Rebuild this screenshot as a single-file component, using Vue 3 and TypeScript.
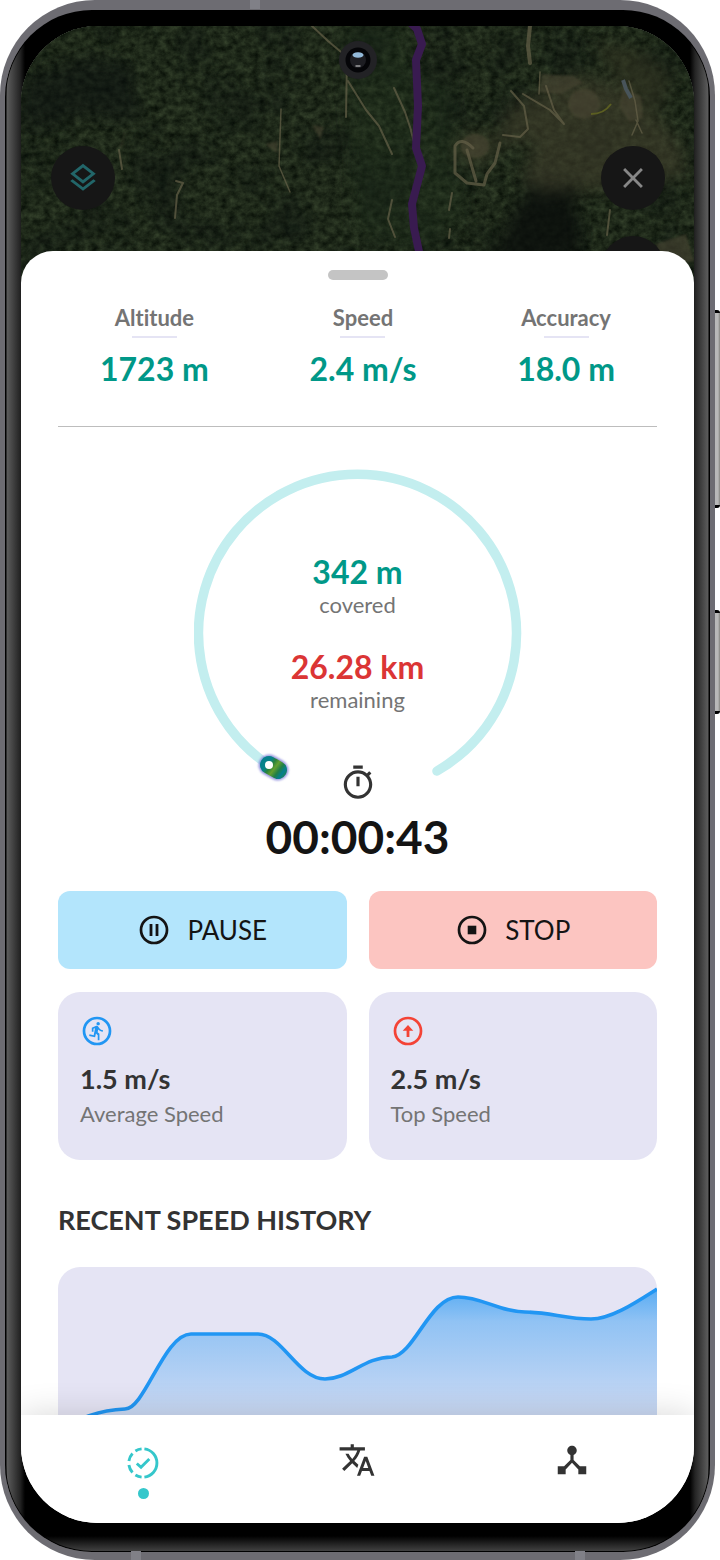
<script setup lang="ts">
import { ref } from 'vue'

interface Reading { label: string; value: string }

const readings: Reading[] = [
  { label: 'Altitude', value: '1723 m' },
  { label: 'Speed', value: '2.4 m/s' },
  { label: 'Accuracy', value: '18.0 m' },
]

const tabs = ['Progress', 'Translate', 'Route'] as const
const active = ref<string>('Progress')
const line =
  'M0 165C22 149 46 143 67 142C87 142 106 67 133 67L200 67C224 67 240 112 267 112C291 112 306 90 334 90C356 88 372 30 400 30C424 30 442 45 467 45C491 45 508 52 533 52C553 52 577 36 599 22'
</script>

<template>
  <div class="stage">
    <div class="side-key volume"></div>
    <div class="side-key power"></div>
    <div class="device">
      <i class="antenna top"></i>
      <i class="antenna bottom-left"></i>
      <i class="antenna bottom-right"></i>
      <div class="bezel">
        <main class="screen">
          <section class="map" aria-label="Map">
            <svg class="terrain" viewBox="0 0 673 262" preserveAspectRatio="xMidYMid slice" aria-hidden="true">
              <defs>
                <filter id="trees" x="0" y="0" width="100%" height="100%" color-interpolation-filters="sRGB">
                  <feTurbulence type="fractalNoise" baseFrequency="0.13 0.15" numOctaves="5" seed="8" />
                  <feColorMatrix values="0.22 0 0 0 0.01  0.25 0 0 0 0.035  0.18 0 0 0 0.01  0 0 0 0 1" />
                </filter>
                <filter id="patches" x="0" y="0" width="100%" height="100%" color-interpolation-filters="sRGB">
                  <feTurbulence type="fractalNoise" baseFrequency="0.018" numOctaves="4" seed="21" />
                  <feColorMatrix values="0 0 0 0 0.045  0 0 0 0 0.07  0 0 0 0 0.06  2.6 0 0 0 -1.15" />
                </filter>
                <filter id="soft" x="-30%" y="-30%" width="160%" height="160%" color-interpolation-filters="sRGB"><feGaussianBlur stdDeviation="8" /></filter>
                <filter id="edge" x="-30%" y="-30%" width="160%" height="160%" color-interpolation-filters="sRGB"><feGaussianBlur stdDeviation="1" /></filter>
              </defs>
              <rect width="673" height="262" fill="#1d2719" />
              <rect width="673" height="262" filter="url(#trees)" />
              <rect width="673" height="262" filter="url(#patches)" opacity=".45" />
              <g filter="url(#soft)">
                <path d="M0 55L65 30L110 40L120 95L60 90L0 105Z" fill="#0c1210" opacity=".55" />
                <path d="M320 0H390V40L430 60L445 190L400 225L335 210Z" fill="#20301c" opacity=".35" />
                <path d="M535 60L560 48L600 62L640 95L660 120L665 150L600 160L530 170L500 155L515 115L470 120L490 80Z" fill="#403d2c" opacity=".6" />
                <path d="M570 15L620 25L650 50L640 90L600 60Z" fill="#333623" opacity=".6" />
                <path d="M500 170L555 160L560 235L470 235Z" fill="#0a0e0b" opacity=".8" />
                <ellipse cx="454" cy="122" rx="20" ry="16" fill="#403f2c" opacity=".6" />
              </g>
              <g filter="url(#edge)" fill="#4a4734" opacity=".6">
                <ellipse cx="563" cy="78" rx="16" ry="15" />
                <path d="M521 48L553 50L562 57L540 68L518 66Z" />
                <path d="M602 62L620 70L622 92L608 96L598 80Z" />
                <ellipse cx="454" cy="120" rx="14" ry="12" />
                <path d="M635 218L665 208L673 235L640 240Z" />
                <path d="M291 99L303 101L299 113ZM244 118L257 115L256 127ZM98 125L106 99L101 120Z" />
              </g>
              <g fill="none" stroke="#666149" stroke-width="2" opacity=".7" stroke-linecap="round" stroke-linejoin="round">
                <path d="M291 0L307 15L326 31L325 91M327 55L345 84L358 100L371 128" />
                <path d="M260 83L258 140L269 166" stroke-width="1.5" />
                <path d="M98 124L101 143M155 155L162 157L156 169L154 192" stroke-width="2" />
                <path d="M373 62L384 86L390 104M390 105L394 120" stroke-width="2" />
                <path d="M509 0L507 20L509 37" stroke-width="4" />
                <path d="M452 122Q440 110 434 120V147L446 157L463 159L466 148L474 137L479 117M446 124L455 155" stroke-width="3" />
                <path d="M490 65L503 80L507 103L499 111L482 109M502 68L529 84L543 98L533 84L525 60" />
                <path d="M519 46L518 68M608 55L614 75L617 95L611 109M615 94L621 107" stroke-width="1.5" />
                <path d="M589 184L586 209M371 174L367 193L374 211M431 167L428 184M429 203L428 212" stroke-width="2" />
              </g>
              <path d="M570 88Q583 88 590 78" fill="none" stroke="#5b5e22" stroke-width="2" />
              <path d="M602 54L605 63L610 72" fill="none" stroke="#48545a" stroke-width="4" />
              <path class="route" d="M387 -6L396 3L401 18L395 34L397 80L395 122L401 140L391 178L393 202L400 235" />
            </svg>
            <span class="camera">
              <svg viewBox="0 0 38 38" aria-hidden="true">
                <circle cx="19" cy="19" r="19" fill="#222225" /><circle cx="19" cy="19" r="12.5" fill="#050508" />
                <circle cx="19" cy="19" r="8" fill="#1d1d22" />
                <ellipse cx="19" cy="14" rx="5.5" ry="2.8" fill="#93b9d9" /><path d="M16.5 25h5" stroke="#aaa" stroke-width="1.4" />
              </svg>
            </span>
            <button class="round layers" type="button" aria-label="Map layers">
              <svg viewBox="0 0 24 24"><path d="M11.99 18.54l-7.37-5.73L3 14.07l9 7 9-7-1.63-1.27-7.38 5.74zM12 16l7.36-5.73L21 9l-9-7-9 7 1.63 1.27L12 16zm0-11.47L17.74 9 12 13.47 6.26 9 12 4.53z" /></svg>
            </button>
            <div class="map-actions">
              <button class="round" type="button" aria-label="Close">
                <svg viewBox="0 0 24 24"><path d="M19 6.41L17.59 5 12 10.59 6.41 5 5 6.41 10.59 12 5 17.59 6.41 19 12 13.41 17.59 19 19 17.59 13.41 12z" /></svg>
              </button>
              <button class="round" type="button" aria-label="Locate"></button>
            </div>
          </section>

          <section class="sheet">
            <div class="handle"></div>
            <dl class="readings">
              <div v-for="r in readings" :key="r.label" class="reading">
                <dt>{{ r.label }}</dt>
                <dd>{{ r.value }}</dd>
              </div>
            </dl>
            <hr class="divider" />

            <div class="gauge">
              <svg class="arc" viewBox="0 0 328 316" aria-hidden="true">
                <defs>
                  <linearGradient id="bead" x1="68" y1="290" x2="92" y2="308" gradientUnits="userSpaceOnUse">
                    <stop offset="0" stop-color="#04808c" /><stop offset=".25" stop-color="#07838a" />
                    <stop offset=".38" stop-color="#29813c" /><stop offset=".52" stop-color="#649f30" />
                    <stop offset=".68" stop-color="#217f47" /><stop offset=".82" stop-color="#047f8f" />
                    <stop offset="1" stop-color="#278443" />
                  </linearGradient>
                  <filter id="glow" filterUnits="userSpaceOnUse" x="55" y="275" width="50" height="41"><feGaussianBlur stdDeviation="1.3" /></filter>
                </defs>
                <path d="M84 302A159 159 0 1 1 243 302" fill="none" stroke="#c3eeef" stroke-width="9.5" stroke-linecap="round" />
                <path d="M75 296L84 301" stroke="#6c6bd2" stroke-width="21" stroke-linecap="round" filter="url(#glow)" opacity=".7" />
                <path d="M75 296L84 301" stroke="url(#bead)" stroke-width="18" stroke-linecap="round" />
                <circle cx="75" cy="296" r="4" fill="#fff" />
              </svg>
              <div class="distances">
                <p class="amount">342 m</p>
                <p class="caption">covered</p>
                <p class="amount left">26.28 km</p>
                <p class="caption">remaining</p>
              </div>
            </div>

            <div class="timer">
              <svg viewBox="0 0 24 24" aria-hidden="true"><path d="M15 1H9v2h6V1zm-4 13h2V8h-2v6zm8.03-6.61l1.42-1.42c-.43-.51-.9-.99-1.41-1.41l-1.42 1.42C16.07 4.74 14.12 4 12 4c-4.97 0-9 4.03-9 9s4.02 9 9 9 9-4.03 9-9c0-2.12-.74-4.07-1.97-5.61zM12 20c-3.87 0-7-3.13-7-7s3.13-7 7-7 7 3.13 7 7-3.13 7-7 7z" /></svg>
              <time>00:00:43</time>
            </div>

            <div class="pair">
              <button class="action pause" type="button">
                <svg viewBox="0 0 34 34" aria-hidden="true"><circle cx="17" cy="17" r="13" fill="none" stroke="currentColor" stroke-width="2.7" /><path d="M14 11v12M20 11v12" stroke="currentColor" stroke-width="2.8" /></svg>
                PAUSE
              </button>
              <button class="action stop" type="button">
                <svg viewBox="0 0 34 34" aria-hidden="true"><circle cx="17" cy="17" r="13" fill="none" stroke="currentColor" stroke-width="2.7" /><path d="M12.7 12.7h8.6v8.6h-8.6z" fill="currentColor" /></svg>
                STOP
              </button>
            </div>

            <div class="pair cards">
              <article class="card">
                <svg class="blue" viewBox="0 0 34 34" aria-hidden="true">
                  <circle cx="17" cy="17" r="13" fill="none" stroke="currentColor" stroke-width="2.7" />
                  <g transform="translate(6.7 6.7) scale(.85)" fill="currentColor"><path d="M13.49 5.48c1.1 0 2-.9 2-2s-.9-2-2-2-2 .9-2 2 .9 2 2 2zm-3.6 13.9l1-4.4 2.1 2v6h2v-7.5l-2.1-2 .6-3c1.3 1.5 3.3 2.5 5.5 2.5v-2c-1.9 0-3.5-1-4.3-2.4l-1-1.6c-.4-.6-1-1-1.7-1-.3 0-.5.1-.8.1l-5.2 2.2v4.7h2v-3.4l1.8-.7-1.6 8.1-4.9-1-.4 2 7 1.4z" /></g>
                </svg>
                <strong>1.5 m/s</strong>
                <span>Average Speed</span>
              </article>
              <article class="card">
                <svg class="red" viewBox="0 0 34 34" aria-hidden="true">
                  <circle cx="17" cy="17" r="13" fill="none" stroke="currentColor" stroke-width="2.7" />
                  <path d="M17 11L22.3 16.7H18.4V23H15.6V16.7H11.7Z" fill="currentColor" />
                </svg>
                <strong>2.5 m/s</strong>
                <span>Top Speed</span>
              </article>
            </div>

            <h2>RECENT SPEED HISTORY</h2>
            <div class="chart">
              <svg viewBox="0 0 599 190" preserveAspectRatio="none" role="img" aria-label="Recent speed history">
                <defs>
                  <linearGradient id="area" x1="0" y1="22" x2="0" y2="170" gradientUnits="userSpaceOnUse">
                    <stop offset="0" stop-color="#2196f3" stop-opacity=".72" />
                    <stop offset=".22" stop-color="#2196f3" stop-opacity=".43" />
                    <stop offset="1" stop-color="#2196f3" stop-opacity=".06" />
                  </linearGradient>
                </defs>
                <path :d="line + 'V190H0Z'" fill="url(#area)" />
                <path :d="line" fill="none" stroke="#2196f3" stroke-width="3.6" />
              </svg>
            </div>
          </section>

          <nav class="tabs" aria-label="Main">
            <button v-for="t in tabs" :key="t" type="button" class="tab" :class="{ on: active === t }" :aria-label="t" @click="active = t">
              <svg v-if="t === 'Progress'" viewBox="0 0 38 38" fill="none" stroke="currentColor" stroke-width="2.9">
                <path d="M20.4 4.9A14.2 14.2 0 0 1 20.4 33.1" />
                <path d="M17.6 4.9A14.2 14.2 0 0 0 11.4 7M8.5 9.5A14.2 14.2 0 0 0 4.9 17M4.9 21A14.2 14.2 0 0 0 8.5 28.5M11.4 31A14.2 14.2 0 0 0 17.6 33.1" />
                <path d="M12.8 19.5L17 23.3L25.3 15" />
              </svg>
              <svg v-else-if="t === 'Translate'" viewBox="0 0 24 24" fill="currentColor"><path d="M12.87 15.07l-2.54-2.51.03-.03c1.74-1.94 2.98-4.17 3.71-6.53H17V4h-7V2H8v2H1v1.99h11.17C11.5 7.92 10.44 9.75 9 11.35 8.07 10.32 7.3 9.19 6.69 8h-2c.73 1.63 1.73 3.17 2.98 4.56l-5.09 5.02L4 19l5-5 3.11 3.11.76-2.04zM18.5 10h-2L12 22h2l1.12-3h4.75L21 22h2l-4.5-12zm-2.62 7l1.62-4.33L19.12 17h-3.24z" /></svg>
              <svg v-else viewBox="0 0 24 24" fill="currentColor"><path d="M17 16l-4-4V8.82C14.16 8.4 15 7.3 15 6c0-1.66-1.34-3-3-3S9 4.34 9 6c0 1.3.84 2.4 2 2.82V12l-4 4H3v5h5v-3.05l4-4.2 4 4.2V21h5v-5h-4z" /></svg>
              <i class="dot"></i>
            </button>
          </nav>
        </main>
      </div>
    </div>
  </div>
</template>

<style>
body { background: #fff; }
</style>

<style scoped>
* { box-sizing: border-box; }
p, dl, dd, h2 { margin: 0; }
button { border: 0; padding: 0; font: inherit; color: inherit; cursor: pointer; }
svg { display: block; }

.stage {
  position: relative;
  display: flex;
  height: 100vh;
  padding-right: 5px;
  font-family: Lato, "Open Sans", sans-serif;
  font-variant-ligatures: none;
}
.device {
  position: relative;
  display: flex;
  flex: 1;
  min-width: 0;
  padding: 10px 5px 8px;
  border-radius: 95px;
  background: #6d6c72;
  overflow: hidden;
}
.side-key {
  position: absolute;
  right: 0;
  width: 8px;
  background: linear-gradient(90deg, #b8b8b8 75%, #84847f);
  border: solid #000;
  border-width: 3px 0;
  border-radius: 0 3px 3px 0;
}
.volume { top: 310px; height: 198px; }
.power { top: 610px; height: 104px; }
.antenna { position: absolute; width: 10px; height: 9px; background: #808087; }
.top { top: 0; left: 250px; }
.bottom-left { bottom: 0; left: 131px; }
.bottom-right { bottom: 0; right: 130px; }

.bezel {
  display: flex;
  flex: 1;
  min-width: 0;
  padding: 16px 16px 29px;
  border-radius: 87px;
  box-shadow: inset 0 0 0 1px #000;
  background:
    linear-gradient(90deg, #000 1px, #5c5c5c 2px, #242424 15px, #000 20px) 0 32px / 20px calc(100% - 60px) no-repeat,
    linear-gradient(270deg, #000 1px, #5c5c5c 2px, #242424 15px, #000 20px) 100% 32px / 20px calc(100% - 60px) no-repeat,
    linear-gradient(0deg, #464646, #000 16px) #000;
}
.screen {
  display: flex;
  flex: 1;
  flex-direction: column;
  min-width: 0;
  border-radius: 77px;
  background: #fff;
  overflow: hidden;
}

.map { position: relative; flex: none; height: 262px; overflow: hidden; background: #1d2719; }
.terrain { width: 100%; height: 100%; }
.route { fill: none; stroke: #391b50; stroke-width: 8; stroke-linejoin: round; }
.camera { position: absolute; top: 15px; left: calc(50% - 19px); width: 38px; height: 38px; }
.round {
  display: grid;
  place-items: center;
  width: 64px;
  height: 64px;
  border-radius: 50%;
  background: #161616;
  color: #878787;
}
.round svg { width: 34px; height: 34px; fill: currentColor; }
.layers { position: absolute; top: 120px; left: 30px; color: #226669; }
.map-actions { position: absolute; top: 120px; right: 29px; display: grid; gap: 26px; }

.sheet {
  position: relative;
  flex: 1;
  min-height: 0;
  margin-top: -37px;
  padding: 19px 37px 0;
  border-radius: 32px 32px 0 0;
  background: #fff;
  overflow: auto;
  scrollbar-width: none;
}
.handle { width: 60px; height: 10px; margin: 0 auto; border-radius: 5px; background: #c4c4c4; }
.readings { display: flex; justify-content: space-between; margin-top: 26px; padding: 0 42px; }
.reading { display: flex; flex-direction: column; align-items: center; }
.reading dt { color: #747474; font-size: 22px; font-weight: 700; line-height: 24px; }
.reading dt::after { content: ""; display: block; width: 45px; height: 2px; margin: 6px auto 0; background: #e5e4f4; }
.reading dd { margin-top: 12px; color: #009888; font-size: 32px; font-weight: 700; line-height: 38px; }
.divider { height: 1px; margin: 38px 0 0; border: 0; background: #bdbdbd; }

.gauge { display: grid; justify-content: center; margin-top: 42px; }
.gauge > * { grid-area: 1 / 1; }
.arc { width: 328px; height: 316px; }
.distances { padding-top: 84px; text-align: center; }
.amount { color: #009888; font-size: 32px; font-weight: 700; line-height: 38px; }
.left { margin-top: 29px; color: #db3535; }
.caption { color: #747474; font-size: 22px; line-height: 28px; }

.timer { position: relative; display: flex; flex-direction: column; align-items: center; margin-top: -21px; gap: 10px; }
.timer svg { width: 38px; height: 38px; fill: #333; }
.timer time { color: #141414; font-size: 46px; font-weight: 700; line-height: 50px; }

.pair { display: grid; grid-template-columns: 1fr 1fr; gap: 22px; margin-top: 29px; }
.action {
  display: flex;
  align-items: center;
  justify-content: center;
  gap: 16px;
  height: 78px;
  border-radius: 12px;
  color: #141414;
  font-size: 26px;
}
.action svg { width: 34px; height: 34px; }
.pause { background: #b3e5fc; }
.stop { background: #fcc5c1; }
.cards { margin-top: 23px; }
.card { display: flex; flex-direction: column; height: 168px; padding: 22px; border-radius: 22px; background: #e5e4f4; }
.card svg { width: 34px; height: 34px; }
.blue { color: #2196f3; }
.red { color: #f44336; }
.card strong { margin-top: 15px; color: #333; font-size: 27px; line-height: 32px; }
.card span { margin-top: 5px; color: #747474; font-size: 22px; line-height: 28px; }
h2 { margin-top: 44px; color: #333; font-size: 27px; font-weight: 700; line-height: 32px; }
.chart { height: 190px; margin-top: 31px; border-radius: 22px; background: #e5e4f4; overflow: hidden; }
.chart svg { width: 100%; height: 100%; }

.tabs {
  position: relative;
  display: flex;
  flex: none;
  height: 108px;
  padding: 0 15px;
  background: #fff;
  box-shadow: 0 0 32px rgba(0, 0, 0, .16);
}
.tab { display: flex; flex: 1; flex-direction: column; align-items: center; padding-top: 26px; gap: 8px; background: none; color: #333; }
.tab svg { width: 38px; height: 38px; }
.tab.on { padding-top: 29px; gap: 6px; color: #35c7cb; }
.dot { width: 11px; height: 11px; border-radius: 50%; }
.on .dot { background: currentColor; }
</style>
